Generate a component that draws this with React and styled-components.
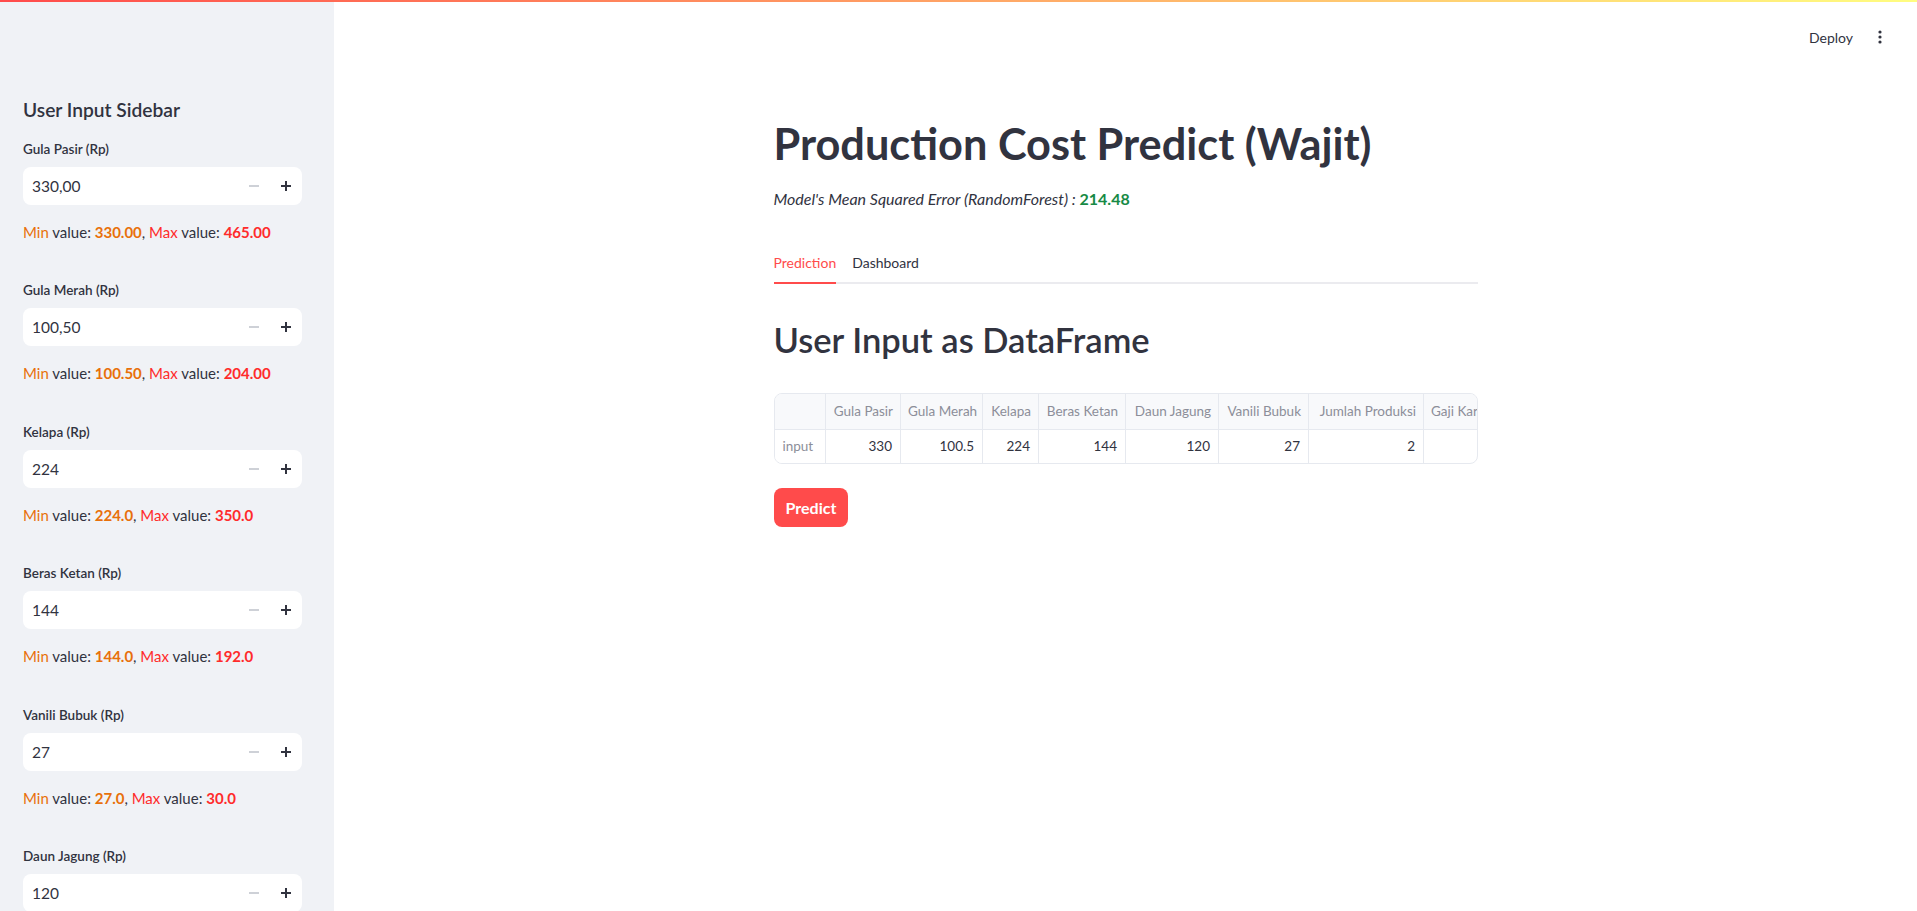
import React from "react";
import styled, { createGlobalStyle } from "styled-components";

const FONT = `"Lato", "Liberation Sans", sans-serif`;

const GlobalStyle = createGlobalStyle`
  html, body {
    margin: 0;
    padding: 0;
    height: 100%;
    overflow: hidden;
  }
  body {
    font-family: ${FONT};
    color: #31333f;
    background: #ffffff;
  }
  * {
    box-sizing: border-box;
  }
`;

const fields = [
  { label: "Gula Pasir (Rp)", value: "330,00", min: "330.00", max: "465.00" },
  { label: "Gula Merah (Rp)", value: "100,50", min: "100.50", max: "204.00" },
  { label: "Kelapa (Rp)", value: "224", min: "224.0", max: "350.0" },
  { label: "Beras Ketan (Rp)", value: "144", min: "144.0", max: "192.0" },
  { label: "Vanili Bubuk (Rp)", value: "27", min: "27.0", max: "30.0" },
  { label: "Daun Jagung (Rp)", value: "120", min: "120.0", max: "150.0" },
];

const columns = [
  { name: "", width: 51 },
  { name: "Gula Pasir", width: 75, value: "330" },
  { name: "Gula Merah", width: 82, value: "100.5" },
  { name: "Kelapa", width: 56, value: "224" },
  { name: "Beras Ketan", width: 87, value: "144" },
  { name: "Daun Jagung", width: 93, value: "120" },
  { name: "Vanili Bubuk", width: 90, value: "27" },
  { name: "Jumlah Produksi", width: 115, value: "2" },
  { name: "Gaji Karyawan", width: 99, value: "" },
];

const tableWidth = columns.reduce((sum, c) => sum + c.width, 0);

function NumberInput({ value }) {
  return (
    <InputBox>
      <InputValue>{value}</InputValue>
      <StepButton $disabled>
        <svg width="12" height="12" viewBox="0 0 12 12">
          <line x1="1" y1="6" x2="11" y2="6" stroke="currentColor" strokeWidth="1.8" />
        </svg>
      </StepButton>
      <StepButton>
        <svg width="12" height="12" viewBox="0 0 12 12">
          <line x1="1" y1="6" x2="11" y2="6" stroke="currentColor" strokeWidth="2" />
          <line x1="6" y1="1" x2="6" y2="11" stroke="currentColor" strokeWidth="2" />
        </svg>
      </StepButton>
    </InputBox>
  );
}

export default function App() {
  return (
    <>
      <GlobalStyle />
      <Page>
        <Decoration />
        <Body>
          <Sidebar>
            <SidebarTitle>User Input Sidebar</SidebarTitle>
            {fields.map((f) => (
              <Field key={f.label}>
                <FieldLabel>{f.label}</FieldLabel>
                <NumberInput value={f.value} />
                <RangeText>
                  <Colored $color="#e8700a">Min</Colored> value:{" "}
                  <Colored $color="#e8700a" $bold>{f.min}</Colored>,{" "}
                  <Colored $color="#ff2b2b">Max</Colored> value:{" "}
                  <Colored $color="#ff2b2b" $bold>{f.max}</Colored>
                </RangeText>
              </Field>
            ))}
          </Sidebar>

          <Main>
            <Header>
              <DeployButton>Deploy</DeployButton>
              <MenuButton>
                <svg width="4" height="14" viewBox="0 0 4 14">
                  <circle cx="2" cy="2" r="1.6" fill="#31333f" />
                  <circle cx="2" cy="7" r="1.6" fill="#31333f" />
                  <circle cx="2" cy="12" r="1.6" fill="#31333f" />
                </svg>
              </MenuButton>
            </Header>

            <Content>
              <Title>Production Cost Predict (Wajit)</Title>
              <Subtitle>
                <em>Model's Mean Squared Error (RandomForest) : </em>
                <Colored $color="#178a45" $bold>214.48</Colored>
              </Subtitle>

              <Tabs>
                <Tab $active>Prediction</Tab>
                <Tab>Dashboard</Tab>
              </Tabs>

              <SectionTitle>User Input as DataFrame</SectionTitle>

              <TableWrap>
                <Table style={{ width: tableWidth }}>
                  <colgroup>
                    {columns.map((c, i) => (
                      <col key={i} style={{ width: c.width }} />
                    ))}
                  </colgroup>
                  <thead>
                    <tr>
                      {columns.map((c, i) => (
                        <HeadCell key={i}>{c.name}</HeadCell>
                      ))}
                    </tr>
                  </thead>
                  <tbody>
                    <tr>
                      <IndexCell>input</IndexCell>
                      {columns.slice(1).map((c, i) => (
                        <Cell key={i}>{c.value}</Cell>
                      ))}
                    </tr>
                  </tbody>
                </Table>
              </TableWrap>

              <PrimaryButton>Predict</PrimaryButton>
            </Content>
          </Main>
        </Body>
      </Page>
    </>
  );
}

const Page = styled.div`
  display: flex;
  flex-direction: column;
  height: 100vh;
`;

const Decoration = styled.div`
  height: 2px;
  flex-shrink: 0;
  background: linear-gradient(90deg, #ff4b4b, #fffd80);
`;

const Body = styled.div`
  flex: 1;
  display: flex;
  min-height: 0;
`;

const Sidebar = styled.aside`
  width: 334px;
  flex-shrink: 0;
  background: #f0f2f6;
  padding: 95px 32px 0 23px;
  overflow: hidden;
  display: flex;
  flex-direction: column;
  gap: 36.5px;
`;

const SidebarTitle = styled.h2`
  margin: 0 0 -20px;
  font-size: 19.2px;
  line-height: 25px;
  font-weight: 600;
`;

const Field = styled.div`
  display: flex;
  flex-direction: column;
  flex-shrink: 0;
`;

const FieldLabel = styled.label`
  font-size: 13.5px;
  line-height: 21px;
  font-weight: 600;
  margin-bottom: 7px;
`;

const InputBox = styled.div`
  height: 38px;
  background: #ffffff;
  border-radius: 8px;
  display: flex;
  align-items: center;
  padding-left: 9px;
`;

const InputValue = styled.span`
  flex: 1;
  font-size: 15.5px;
`;

const StepButton = styled.span`
  width: 32px;
  height: 38px;
  display: flex;
  align-items: center;
  justify-content: center;
  color: ${(p) => (p.$disabled ? "#c9ccd3" : "#31333f")};
`;

const RangeText = styled.p`
  margin: 15px 0 0;
  font-size: 15px;
  line-height: 24px;
`;

const Colored = styled.span`
  color: ${(p) => p.$color};
  font-weight: ${(p) => (p.$bold ? 700 : 400)};
  font-style: normal;
`;

const Main = styled.main`
  flex: 1;
  display: flex;
  flex-direction: column;
  min-width: 0;
`;

const Header = styled.header`
  height: 70px;
  display: flex;
  align-items: center;
  justify-content: flex-end;
  padding-right: 35px;
  gap: 25px;
`;

const DeployButton = styled.span`
  font-size: 14px;
  color: #31333f;
`;

const MenuButton = styled.span`
  display: flex;
  align-items: center;
`;

const Content = styled.div`
  width: 704px;
  margin: 0 auto;
  padding-top: 45px;
  display: flex;
  flex-direction: column;
  align-items: flex-start;
`;

const Title = styled.h1`
  margin: 0;
  font-size: 43.3px;
  line-height: 53px;
  font-weight: 700;
`;

const Subtitle = styled.p`
  margin: 17px 0 0;
  font-size: 16px;
  line-height: 24px;
`;

const Tabs = styled.div`
  margin-top: 41px;
  width: 100%;
  display: flex;
  gap: 16px;
  border-bottom: 2px solid #ebebef;
`;

const Tab = styled.span`
  font-size: 14px;
  line-height: 21px;
  padding-bottom: 9px;
  margin-bottom: -2px;
  color: ${(p) => (p.$active ? "#ff4b4b" : "#31333f")};
  border-bottom: 2px solid ${(p) => (p.$active ? "#ff4b4b" : "transparent")};
`;

const SectionTitle = styled.h2`
  margin: 34px 0 0;
  font-size: 34.5px;
  line-height: 43px;
  font-weight: 600;
`;

const TableWrap = styled.div`
  margin-top: 32px;
  width: 100%;
  border: 1px solid #e6e9ef;
  border-radius: 8px;
  overflow: hidden;
`;

const Table = styled.table`
  border-collapse: collapse;
  table-layout: fixed;
  font-size: 13.5px;
`;

const HeadCell = styled.th`
  height: 35px;
  padding: 0 7px;
  background: #f8f9fb;
  color: #8c8e99;
  font-weight: 400;
  text-align: right;
  white-space: nowrap;
  overflow: hidden;
  border-right: 1px solid #e6e9ef;
  border-bottom: 1px solid #e6e9ef;
`;

const Cell = styled.td`
  height: 34px;
  padding: 0 8px;
  text-align: right;
  color: #31333f;
  border-right: 1px solid #e6e9ef;
  white-space: nowrap;
  overflow: hidden;
`;

const IndexCell = styled(Cell)`
  text-align: left;
  color: #8c8e99;
  background: #ffffff;
`;

const PrimaryButton = styled.button`
  margin-top: 24px;
  height: 39px;
  padding: 0 12px;
  border: none;
  border-radius: 8px;
  background: #ff4b4b;
  color: #ffffff;
  font-family: ${FONT};
  font-size: 16px;
  font-weight: 700;
`;
